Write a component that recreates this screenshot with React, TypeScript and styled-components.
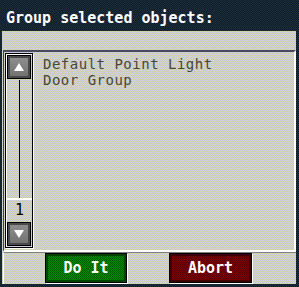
import styled, { createGlobalStyle } from "styled-components";

const dark = "repeating-conic-gradient(#0e1c32 0 25%, #1f2f34 0 50%) 0 0 / 2px 2px";
const light = "repeating-conic-gradient(#c6c6da 0 25%, #d8d8b2 0 50%) 0 0 / 2px 2px";

const GlobalStyle = createGlobalStyle`
  html, body {
    margin: 0;
    padding: 0;
    width: 299px;
    height: 287px;
    overflow: hidden;
    background: ${dark};
  }
  * {
    box-sizing: border-box;
  }
`;

const Screen = styled.div`
  width: 299px;
  height: 287px;
  display: flex;
  flex-direction: column;
  font-family: "DejaVu Sans Mono", "Liberation Mono", monospace;
  font-size: 15px;
`;

const TitleBar = styled.div`
  height: 31px;
  padding: 10px 0 0 6px;
  line-height: 17px;
  font-weight: bold;
  color: #ffffff;
  white-space: pre;
`;

const Panel = styled.div`
  height: 253px;
  margin: 0 3px 0 2px;
  background: ${light};
  display: flex;
  flex-direction: column;
`;

const HeaderSpace = styled.div`
  height: 19px;
`;

const ListBox = styled.div`
  height: 202px;
  margin-left: 1px;
  padding: 1px 0 0 1px;
  border-top: 2px solid #4a4a5e;
  border-left: 1px solid #3c4058;
  border-right: 2px solid #ffffff;
  border-bottom: 2px solid #ffffff;
  display: flex;
`;

const ScrollColumn = styled.div`
  width: 28px;
  height: 195px;
  border: 1px solid #000000;
  box-shadow: 1px 1px 0 #ffffff, inset 1px 1px 0 #ffffff;
  display: flex;
  flex-direction: column;
  align-items: center;
`;

const ScrollButton = styled.div`
  width: 24px;
  height: 24px;
  margin: 1px 0;
  border: 1px solid #000000;
  background: linear-gradient(#909090, #707070);
  box-shadow: inset 0 0 0 2px #4a4a4a;
  display: flex;
  align-items: center;
  justify-content: center;
`;

const Track = styled.div`
  flex: 1;
  width: 1px;
  background: #000000;
`;

const PageBox = styled.div`
  width: 26px;
  height: 23px;
  border-top: 2px solid #ffffff;
  border-left: 1px solid #ffffff;
  color: #000000;
  line-height: 21px;
  text-align: center;
`;

const Items = styled.div`
  padding: 3px 0 0 10px;
  font-size: 14px;
  letter-spacing: 0.5px;
  line-height: 16px;
  color: #46463a;
  white-space: pre;
`;

const ButtonBar = styled.div`
  flex: 1;
  margin-left: 1px;
  padding-left: 41px;
  border-top: 1px solid #7e7e86;
  border-left: 1px solid #ffffff;
  display: flex;
  gap: 42px;
  align-items: flex-start;
`;

const ActionButton = styled.div<{ $tone: "go" | "stop"; $w: number }>`
  width: ${(p) => p.$w}px;
  height: 30px;
  border: 1px solid #000000;
  box-shadow: 1px 1px 0 #ffffff,
    inset 0 0 0 2px ${(p) => (p.$tone === "go" ? "#004400" : "#3e0000")};
  background: ${(p) =>
    p.$tone === "go"
      ? "repeating-conic-gradient(#008a00 0 25%, #005c00 0 50%) 0 0 / 2px 2px"
      : "repeating-conic-gradient(#7c0000 0 25%, #5a0008 0 50%) 0 0 / 2px 2px"};
  color: #ffffff;
  font-weight: bold;
  line-height: 28px;
  text-align: center;
`;

function Arrow({ up }: { up?: boolean }) {
  return (
    <svg width="10" height="8" viewBox="0 0 10 8">
      <polygon points={up ? "5,0 10,8 0,8" : "0,0 10,0 5,8"} fill="#ffffff" />
    </svg>
  );
}

export default function App() {
  return (
    <Screen>
      <GlobalStyle />
      <TitleBar>Group selected objects:</TitleBar>
      <Panel>
        <HeaderSpace />
        <ListBox>
          <ScrollColumn>
            <ScrollButton>
              <Arrow up />
            </ScrollButton>
            <Track />
            <PageBox>1</PageBox>
            <ScrollButton>
              <Arrow />
            </ScrollButton>
          </ScrollColumn>
          <Items>
            <div>Default Point Light</div>
            <div>Door Group</div>
          </Items>
        </ListBox>
        <ButtonBar>
          <ActionButton $tone="go" $w={82}>Do It</ActionButton>
          <ActionButton $tone="stop" $w={83}>Abort</ActionButton>
        </ButtonBar>
      </Panel>
    </Screen>
  );
}
